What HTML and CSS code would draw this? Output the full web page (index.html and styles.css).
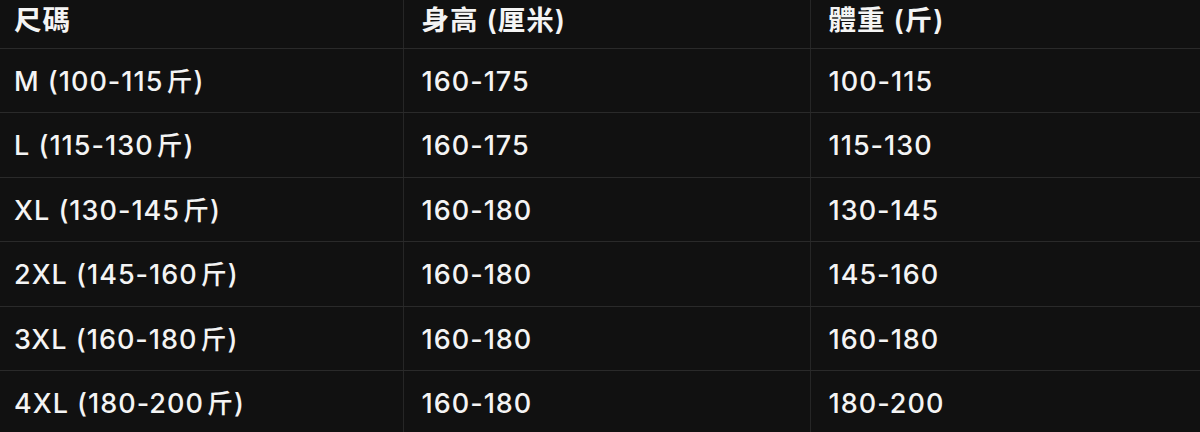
FILE: index.html
```html
<!DOCTYPE html>
<html lang="zh-Hant">
<head>
<meta charset="utf-8">
<link rel="stylesheet" href="styles.css">
</head>
<body>
<table class="size-table">
  <thead>
    <tr><th>尺碼</th><th>身高 (厘米)</th><th>體重 (斤)</th></tr>
  </thead>
  <tbody>
    <tr><td>M (100-115<span class="unit">斤</span>)</td><td>160-175</td><td>100-115</td></tr>
    <tr><td>L (115-130<span class="unit">斤</span>)</td><td>160-175</td><td>115-130</td></tr>
    <tr><td>XL (130-145<span class="unit">斤</span>)</td><td>160-180</td><td>130-145</td></tr>
    <tr><td>2XL (145-160<span class="unit">斤</span>)</td><td>160-180</td><td>145-160</td></tr>
    <tr><td>3XL (160-180<span class="unit">斤</span>)</td><td>160-180</td><td>160-180</td></tr>
    <tr><td>4XL (180-200<span class="unit">斤</span>)</td><td>160-180</td><td>180-200</td></tr>
  </tbody>
</table>
</body>
</html>
```

FILE: styles.css
```css
html, body {
  margin: 0;
  padding: 0;
  background: #111111;
  overflow: hidden;
}
body {
  width: 1200px;
  height: 432px;
}
.size-table {
  margin-left: -4px;
  width: 1221px;
  table-layout: fixed;
  border-collapse: collapse;
  font-family: Inter, "Noto Sans CJK TC", sans-serif;
  font-weight: 500;
  font-size: 27px;
  letter-spacing: 1px;
  color: #f4f4f4;
}
.size-table th,
.size-table td {
  text-align: left;
  padding: 0 0 0 18px;
  border-right: 1px solid #262626;
  border-bottom: 1px solid #2a2a2a;
  white-space: nowrap;
}
.size-table th:last-child,
.size-table td:last-child {
  border-right: none;
}
.size-table th {
  height: 48px;
  font-weight: 600;
  font-size: 27.5px;
  letter-spacing: 1px;
  line-height: 38px;
  vertical-align: top;
  padding-top: 1px;
  box-sizing: border-box;
}
.size-table td {
  height: 64.5px;
  line-height: 36px;
  padding-top: 3px;
  box-sizing: border-box;
  vertical-align: middle;
}
.unit {
  margin-left: 3px;
  font-size: 26px;
}
```
